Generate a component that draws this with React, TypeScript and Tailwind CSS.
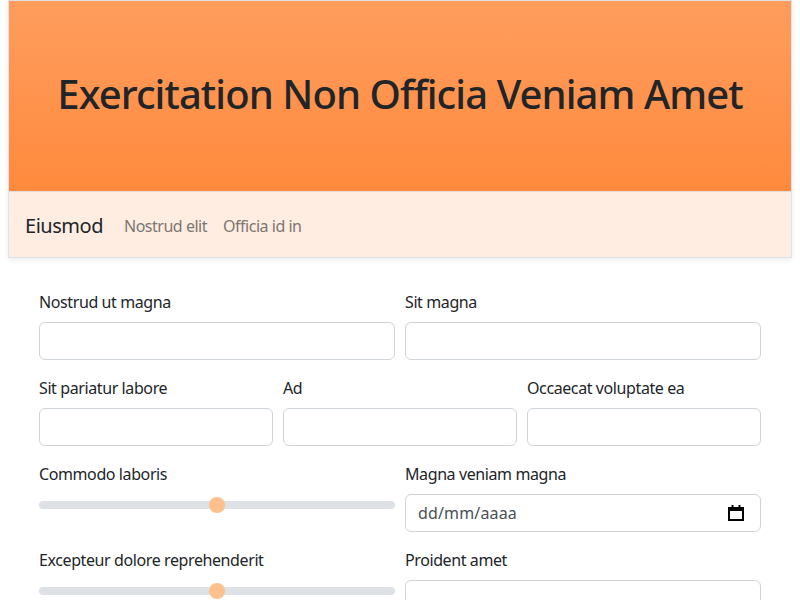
import { useState } from 'react';

const font = { fontFamily: '"Noto Sans", "Open Sans", sans-serif' };

const Field = ({ label, children }: { label: string; children: React.ReactNode }) => (
  <div className="flex flex-col">
    <label className="mb-2 text-base leading-6 tracking-[-0.025em] text-[#212529]">{label}</label>
    {children}
  </div>
);

const TextInput = () => (
  <input
    type="text"
    className="h-[38px] w-full rounded-md border border-[#ced4da] bg-white px-3 text-base text-[#212529] outline-none"
  />
);

const Range = ({ value, onChange }: { value: number; onChange: (v: number) => void }) => (
  <input
    type="range"
    min={0}
    max={100}
    value={value}
    onChange={e => onChange(Number(e.target.value))}
    className="mt-[7px] block h-2 w-full cursor-pointer appearance-none rounded-full bg-[#dee2e6] outline-none [&::-webkit-slider-thumb]:h-4 [&::-webkit-slider-thumb]:w-4 [&::-webkit-slider-thumb]:appearance-none [&::-webkit-slider-thumb]:rounded-full [&::-webkit-slider-thumb]:border-0 [&::-webkit-slider-thumb]:bg-[#fec18e]"
  />
);

const CalendarIcon = () => (
  <svg width="18" height="18" viewBox="0 0 18 18" className="text-black">
    <rect x="2" y="4" width="14" height="12" fill="none" stroke="currentColor" strokeWidth="2" />
    <rect x="2" y="4" width="14" height="3" fill="currentColor" />
    <rect x="4.5" y="1" width="2" height="4" fill="currentColor" />
    <rect x="11.5" y="1" width="2" height="4" fill="currentColor" />
  </svg>
);

const App = () => {
  const [commodo, setCommodo] = useState(50);
  const [excepteur, setExcepteur] = useState(50);

  return (
    <div className="min-h-screen bg-white" style={font}>
      {/* Header card */}
      <div className="mx-2 border border-[#dee2e6] shadow-[0_2px_6px_rgba(0,0,0,0.08)]">
        <header className="flex h-[191px] items-center justify-center border-b border-[#dedede] bg-gradient-to-b from-[#ff9d5d] to-[#ff8a3c] pb-1">
          <h1 className="text-[40px] font-medium leading-tight tracking-[-0.023em] text-[#212529]">
            Exercitation Non Officia Veniam Amet
          </h1>
        </header>
        <nav className="flex h-[65px] items-center bg-[#ffede1] px-4 pt-[3px] tracking-[-0.03em]">
          <a className="mr-[13px] text-xl text-[#212529]">Eiusmod</a>
          <a className="px-2 text-base text-[#7c7671]">Nostrud elit</a>
          <a className="px-2 text-base text-[#7c7671]">Officia id in</a>
        </nav>
      </div>

      {/* Form */}
      <form className="mx-auto mt-[32px] flex w-[722px] flex-col gap-4">
        <div className="grid grid-cols-2 gap-x-[10px]">
          <Field label="Nostrud ut magna">
            <TextInput />
          </Field>
          <Field label="Sit magna">
            <TextInput />
          </Field>
        </div>

        <div className="grid grid-cols-3 gap-x-[10px]">
          <Field label="Sit pariatur labore">
            <TextInput />
          </Field>
          <Field label="Ad">
            <TextInput />
          </Field>
          <Field label="Occaecat voluptate ea">
            <TextInput />
          </Field>
        </div>

        <div className="grid grid-cols-2 gap-x-[10px]">
          <Field label="Commodo laboris">
            <Range value={commodo} onChange={setCommodo} />
          </Field>
          <Field label="Magna veniam magna">
            <div className="relative">
              <input
                type="text"
                placeholder="dd/mm/aaaa"
                className="h-[38px] w-full rounded-md border border-[#ced4da] bg-white px-3 text-base tracking-[0.01em] text-[#212529] outline-none placeholder:text-[#4a4f55]"
              />
              <span className="pointer-events-none absolute right-[16px] top-[10px]">
                <CalendarIcon />
              </span>
            </div>
          </Field>
        </div>

        <div className="grid grid-cols-2 gap-x-[10px]">
          <Field label="Excepteur dolore reprehenderit">
            <Range value={excepteur} onChange={setExcepteur} />
          </Field>
          <Field label="Proident amet">
            <TextInput />
          </Field>
        </div>
      </form>
    </div>
  );
};

export default App;
